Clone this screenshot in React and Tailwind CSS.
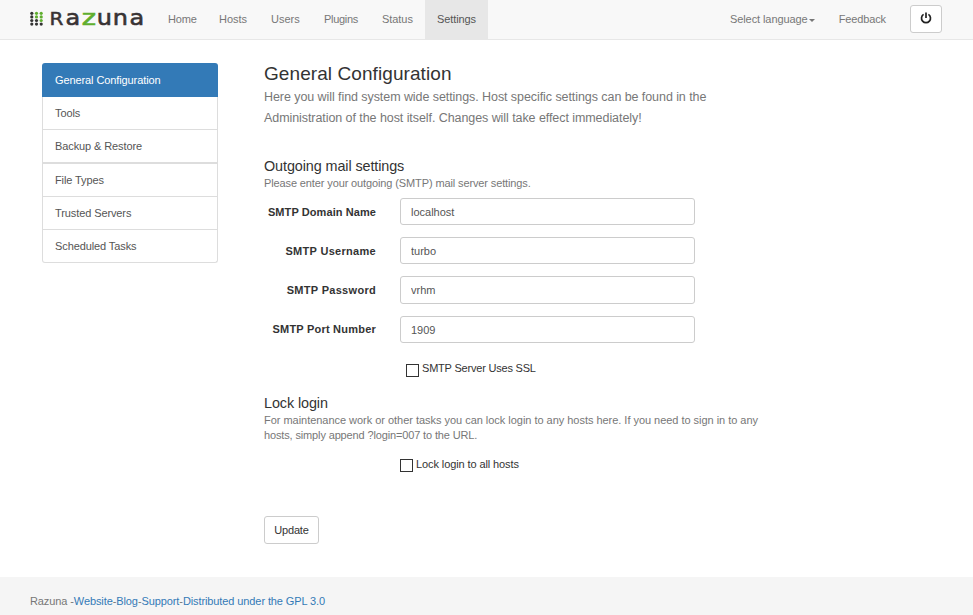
const navItems = [
  { label: 'Home', cls: 'w-[51px] tracking-[-0.15px]' },
  { label: 'Hosts', cls: 'w-[52px] tracking-[-0.05px]' },
  { label: 'Users', cls: 'w-[53px]' },
  { label: 'Plugins', cls: 'w-[58px] tracking-[-0.3px]' },
  { label: 'Status', cls: 'w-[55px] tracking-[-0.05px]' },
  { label: 'Settings', cls: 'w-[63px] tracking-[-0.1px] bg-[#e7e7e7] text-[#555]' },
];

const fields = [
  { label: 'SMTP Domain Name', value: 'localhost', height: 'h-[27px]', gap: 'mb-3', labelCls: 'pt-[7px] tracking-[0.08px]' },
  { label: 'SMTP Username', value: 'turbo', height: 'h-[27px]', gap: 'mb-3', labelCls: 'pt-[7px] tracking-[0.3px]' },
  { label: 'SMTP Password', value: 'vrhm', height: 'h-[28px]', gap: 'mb-3', labelCls: 'pt-[7px] tracking-[0.3px]' },
  { label: 'SMTP Port Number', value: '1909', height: 'h-[27px]', gap: '', labelCls: 'pt-[6px] tracking-[0.22px]' },
];

const sideItems = [
  { label: 'Tools', cls: 'h-[33px] border-b' },
  { label: 'Backup & Restore', cls: 'h-[34px] border-b-2' },
  { label: 'File Types', cls: 'h-[33px] border-b' },
  { label: 'Trusted Servers', cls: 'h-[33px] border-b' },
  { label: 'Scheduled Tasks', cls: 'h-[33px] border-b rounded-b-[3px]' },
];

const dots = [0, 1, 2, 3].flatMap((row) =>
  [0, 1, 2].map((col) => ({
    x: 31.8 + col * 4.7,
    y: 13.3 + row * 3.6,
    fill: row < 3 && col > 0 && !(row === 2 && col === 1) ? '#5fae2e' : '#333',
  }))
);

const wordmark = [
  { ch: 'R', x: 49.5, sx: 1.25, sy: 1.05, fill: '#383334' },
  { ch: 'a', x: 65.5, sx: 1.5, sy: 1.32, fill: '#383334' },
  { ch: 'z', x: 81.7, sx: 1.7, sy: 1.37, fill: '#5fae2e' },
  { ch: 'u', x: 96.7, sx: 1.5, sy: 1.34, fill: '#383334' },
  { ch: 'n', x: 112.7, sx: 1.5, sy: 1.32, fill: '#383334' },
  { ch: 'a', x: 129.5, sx: 1.5, sy: 1.32, fill: '#383334' },
];

function Logo() {
  return (
    <svg className="h-[39px] w-[156px] shrink-0" viewBox="0 0 156 39" aria-label="Razuna">
      {dots.map((d, i) => (
        <circle key={i} cx={d.x} cy={d.y} r="1.6" fill={d.fill} />
      ))}
      {wordmark.map((l, i) => (
        <text
          key={i}
          transform={`translate(${l.x} 24.8) scale(${l.sx} ${l.sy})`}
          fill={l.fill}
          stroke={l.fill}
          strokeWidth="0.45"
          fontFamily="'DejaVu Sans', sans-serif"
          fontSize="16"
        >
          {l.ch}
        </text>
      ))}
    </svg>
  );
}

function Check({ label, className, boxCls }) {
  return (
    <label className={`flex items-start text-[11px] leading-[15px] ${className}`}>
      <span className={`mr-[3px] h-[13px] w-[13px] shrink-0 border border-[#333] bg-white ${boxCls}`} />
      <span>{label}</span>
    </label>
  );
}

export default function App() {
  return (
    <div className="flex h-[615px] w-[973px] flex-col overflow-hidden bg-white font-['Liberation_Sans',Arial,sans-serif] text-[11px] leading-[15px] text-[#333]">
      <header className="flex h-10 shrink-0 border-b border-[#e7e7e7] bg-[#f8f8f8] text-[#777]">
        <Logo />
        <nav className="flex">
          {navItems.map((n) => (
            <a key={n.label} className={`flex h-[39px] items-center whitespace-nowrap pl-3 ${n.cls}`}>
              {n.label}
            </a>
          ))}
        </nav>
        <div className="ml-auto flex items-center pr-[31px]">
          <a className="flex items-center whitespace-nowrap tracking-[-0.08px]">
            Select language
            <span className="ml-px mt-[2px] border-x-[3px] border-t-[3px] border-x-transparent border-t-[#777]" />
          </a>
          <a className="ml-6 tracking-[-0.12px]">Feedback</a>
          <button className="-mt-[2px] ml-6 flex h-[28px] w-[32px] items-center justify-center rounded-[3px] border border-[#ccc] bg-white">
            <svg className="-mt-px h-3 w-3" viewBox="0 0 12 12" fill="none" stroke="#222" strokeWidth="1.7">
              <path d="M3.6 2.4A4.5 4.5 0 1 0 8.4 2.4" />
              <path d="M6 0.5V6" />
            </svg>
          </button>
        </div>
      </header>

      <div className="flex h-[537px] shrink-0">
        <aside className="ml-[42px] mt-[23px] w-[176px] tracking-[-0.1px] text-[#555]">
          <div className="flex h-[34px] items-center rounded-t-[3px] bg-[#337ab7] pl-[13px] text-white">General Configuration</div>
          {sideItems.map((s) => (
            <div key={s.label} className={`flex items-center border-x border-[#ddd] pl-3 ${s.cls}`}>
              {s.label}
            </div>
          ))}
        </aside>

        <main className="ml-[46px] w-[520px]">
          <h1 className="mt-[22px] text-[19px] leading-[24px] tracking-[0.08px]">General Configuration</h1>
          <p className="mt-px whitespace-nowrap text-[12.5px] leading-[21px] tracking-[-0.07px] text-[#777]">
            Here you will find system wide settings. Host specific settings can be found in the
            <br />
            Administration of the host itself. Changes will take effect immediately!
          </p>

          <h2 className="mt-[29px] text-[14.4px] leading-[17px] tracking-[-0.1px]">Outgoing mail settings</h2>
          <p className="mt-px tracking-[-0.12px] text-[#777]">Please enter your outgoing (SMTP) mail server settings.</p>
          <form className="mt-[7px]">
            {fields.map((f) => (
              <div key={f.label} className={`flex ${f.gap}`}>
                <label className={`w-[112px] text-right font-bold whitespace-nowrap ${f.labelCls}`}>{f.label}</label>
                <input
                  className={`ml-6 w-[295px] rounded-[3px] border border-[#ccc] bg-white px-[10px] text-[#555] ${f.height}`}
                  defaultValue={f.value}
                />
              </div>
            ))}
          </form>
          <Check label="SMTP Server Uses SSL" className="mt-[18px] ml-[142px] tracking-[-0.2px]" boxCls="mt-[3px]" />

          <h2 className="mt-[18px] text-[14.4px] leading-[17px] tracking-[-0.1px]">Lock login</h2>
          <p className="mt-px whitespace-nowrap tracking-[-0.03px] text-[#777]">
            For maintenance work or other tasks you can lock login to any hosts here. If you need to sign in to any
            <br />
            <span className="tracking-[-0.14px]">hosts, simply append ?login=007 to the URL.</span>
          </p>
          <Check label="Lock login to all hosts" className="mt-[14px] ml-[136px] tracking-[-0.1px]" boxCls="mt-[2px]" />
          <button className="mt-[44px] h-[28px] w-[55px] rounded-[3px] border border-[#ccc] bg-white tracking-[-0.2px]">Update</button>
        </main>
      </div>

      <footer className="flex h-[38px] shrink-0 bg-[#f5f5f5] pt-[17px] pl-[30px] tracking-[-0.1px] text-[#777]">
        <span>
          Razuna -<a className="text-[#337ab7]">Website</a>-<a className="text-[#337ab7]">Blog</a>-
          <a className="text-[#337ab7]">Support</a>-<a className="text-[#337ab7]">Distributed under the GPL 3.0</a>
        </span>
      </footer>
    </div>
  );
}
